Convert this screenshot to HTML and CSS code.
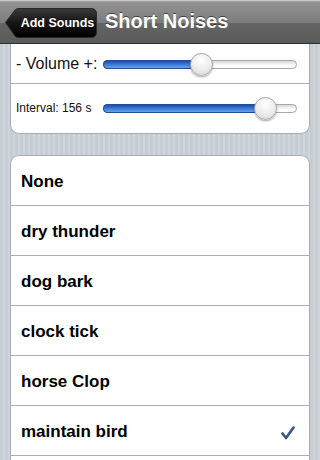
FILE: index.html
```html
<!DOCTYPE html>
<html>
<head>
<meta charset="utf-8">
<link rel="stylesheet" href="styles.css">
</head>
<body>
<div class="screen">
  <header class="navbar">
    <div class="back">
      <svg class="back-bg" width="92" height="30" viewBox="0 0 92 30">
        <defs>
          <linearGradient id="bb" x1="0" y1="0" x2="0" y2="1">
            <stop offset="0" stop-color="#3a3a3a"/>
            <stop offset="0.5" stop-color="#151515"/>
            <stop offset="1" stop-color="#000"/>
          </linearGradient>
        </defs>
        <path d="M0.5 14.5 L10 2 Q11.2 0.5 13.5 0.5 L86 0.5 Q91.5 0.5 91.5 6 L91.5 24 Q91.5 29.5 86 29.5 L13.5 29.5 Q11.2 29.5 10 28 Z" fill="url(#bb)" stroke="#2a2a2a" stroke-width="1"/>
      </svg>
      <span class="back-text">Add Sounds</span>
    </div>
    <h1 class="title">Short Noises</h1>
  </header>
  <main class="content">
    <section class="card settings">
      <div class="row row-vol">
        <span class="label-vol">- Volume +:</span>
        <div class="slider"><div class="fill" style="width:51%"></div><div class="thumb" style="left:51%"></div></div>
      </div>
      <div class="row row-int">
        <span class="label-int">Interval: 156 s</span>
        <div class="slider"><div class="fill" style="width:84%"></div><div class="thumb" style="left:84%"></div></div>
      </div>
    </section>
    <section class="card list">
      <div class="item">None</div>
      <div class="item">dry thunder</div>
      <div class="item">dog bark</div>
      <div class="item">clock tick</div>
      <div class="item">horse Clop</div>
      <div class="item">maintain bird
        <svg class="check" width="14" height="14" viewBox="0 0 14 14"><path d="M1.5 7.5 L5 12 L12.5 1.5" fill="none" stroke="#3a5688" stroke-width="2.6" stroke-linecap="round" stroke-linejoin="round"/></svg>
      </div>
      <div class="item"></div>
    </section>
  </main>
</div>
</body>
</html>
```
FILE: styles.css
```css
* { box-sizing: border-box; }
html, body { margin: 0; padding: 0; }
body {
  width: 320px;
  height: 460px;
  overflow: hidden;
  font-family: "Liberation Sans", Arial, sans-serif;
  background: repeating-linear-gradient(90deg, #c7cdd5 0px, #c7cdd5 3px, #cfd5dc 3px, #cfd5dc 5px);
}
.screen { width: 320px; height: 460px; display: flex; flex-direction: column; overflow: hidden; }
.navbar {
  height: 44px;
  flex: none;
  display: flex;
  align-items: center;
  padding-left: 5px;
  gap: 8px;
  background: linear-gradient(#b0b0b0 0px, #939393 1px, #7c7c7c 22px, #656565 22px, #5a5a5a 42px);
  border-bottom: 1px solid #2f2f2f;
  border-top: 1px solid #c8c8c8;
}
.back { position: relative; width: 92px; height: 30px; margin-top: 1px; }
.back-bg { position: absolute; left: 0; top: 0; }
.back-text {
  position: absolute; left: 13px; right: 0; top: 0; bottom: 0;
  display: flex; align-items: center; justify-content: center;
  color: #fff; font-weight: bold; font-size: 12.5px;
  text-shadow: 0 -1px 0 rgba(0,0,0,0.6);
}
.title {
  margin: 0; color: #fff; font-size: 20px; font-weight: bold;
  text-shadow: 0 -1px 0 rgba(0,0,0,0.5);
  margin-top: -2px;
}
.content { padding: 0 10px; flex: 1; min-height: 0; overflow: hidden; }
.card {
  background: #fff;
  border: 1px solid #a9acb0;
}
.settings { border-top: none; border-radius: 0 0 9px 9px; }
.row { display: flex; align-items: center; }
.row-vol { height: 40px; border-bottom: 1px solid #abadb0; padding: 0 12px 0 5px; }
.row-int { height: 49px; padding: 0 12px 0 5px; }
.label-vol { font-size: 16px; color: #111; width: 87px; }
.label-int { font-size: 12px; color: #111; width: 87px; margin-top: -2px; }
.slider {
  position: relative; flex: 1; height: 9px;
  border-radius: 5px;
  background: linear-gradient(#d8d8d8, #fbfbfb 60%, #fff);
  border: 1px solid #a7a7a7;
}
.row-vol .slider { margin-top: 2px; }
.row-int .slider { margin-top: -1px; }
.fill {
  position: absolute; left: -1px; top: -1px; bottom: -1px;
  border-radius: 5px 0 0 5px;
  background: linear-gradient(#1b4fa6, #3a7ad8 50%, #6a9fe4);
  border: 1px solid #234d92;
  border-right: none;
}
.thumb {
  position: absolute; top: 50%; width: 23px; height: 23px;
  margin-left: -11.5px; margin-top: -11.5px;
  border-radius: 50%;
  background: radial-gradient(circle at 50% 30%, #ffffff 0%, #ececec 55%, #d2d2d2 100%);
  border: 1px solid #a9a9a9;
  box-shadow: 0 1px 2px rgba(0,0,0,0.35);
}
.list { margin-top: 21px; border-radius: 9px 9px 0 0; border-bottom: none; }
.item {
  height: 50px;
  display: flex; align-items: center; justify-content: space-between;
  padding: 2px 14px 0 10px;
  font-size: 17px; font-weight: bold; color: #000;
  border-bottom: 1px solid #abadb0;
}
.item:last-child { border-bottom: none; }
.check { margin-top: 2px; }
```
